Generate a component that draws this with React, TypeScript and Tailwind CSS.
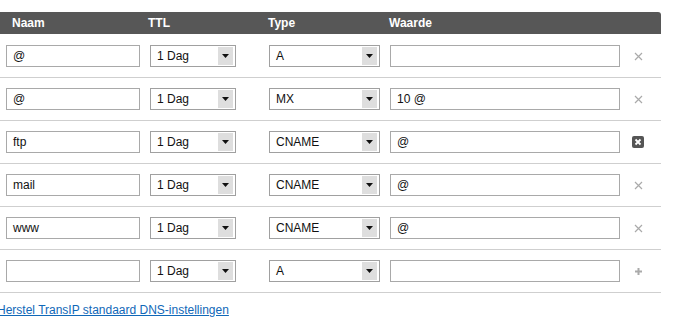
import React from 'react';

interface DnsRecord {
  name: string;
  ttl: string;
  type: string;
  value: string;
  action: 'remove' | 'remove-active' | 'add';
}

const records: DnsRecord[] = [
  { name: '@', ttl: '1 Dag', type: 'A', value: '', action: 'remove' },
  { name: '@', ttl: '1 Dag', type: 'MX', value: '10 @', action: 'remove' },
  { name: 'ftp', ttl: '1 Dag', type: 'CNAME', value: '@', action: 'remove-active' },
  { name: 'mail', ttl: '1 Dag', type: 'CNAME', value: '@', action: 'remove' },
  { name: 'www', ttl: '1 Dag', type: 'CNAME', value: '@', action: 'remove' },
  { name: '', ttl: '1 Dag', type: 'A', value: '', action: 'add' },
];

const FakeSelect: React.FC<{ value: string; className: string }> = ({ value, className }) => (
  <div className={`h-[22px] border border-[#a0a0a0] bg-white flex items-center justify-between pl-[6px] pr-[2px] ${className}`}>
    <span className="text-[12px] text-[#111]">{value}</span>
    <span className="w-[15px] h-[18px] bg-[#dedede] flex items-center justify-center">
      <svg width="7" height="4" viewBox="0 0 7 4">
        <path d="M0 0h7L3.5 4z" fill="#111" />
      </svg>
    </span>
  </div>
);

const ActionIcon: React.FC<{ action: DnsRecord['action'] }> = ({ action }) => {
  if (action === 'add') {
    return (
      <svg width="9" height="9" viewBox="0 0 9 9">
        <path d="M4.5 1v7M1 4.5h7" stroke="#aaa" strokeWidth="2" />
      </svg>
    );
  }
  if (action === 'remove-active') {
    return (
      <svg width="12" height="12" viewBox="0 0 12 12">
        <rect width="12" height="12" rx="2" fill="#555" />
        <path d="M3.5 3.5l5 5M8.5 3.5l-5 5" stroke="#fff" strokeWidth="1.8" />
      </svg>
    );
  }
  return (
    <svg width="9" height="9" viewBox="0 0 9 9">
      <path d="M1 1l7 7M8 1l-7 7" stroke="#aaa" strokeWidth="1.2" />
    </svg>
  );
};

export default function App() {
  return (
    <div className="w-[678px] h-[320px] bg-white pt-[12px] overflow-hidden" style={{ fontFamily: '"Liberation Sans", Arial, sans-serif' }}>
      <div className="w-[661px]">
        <div className="h-[22px] bg-[#575757] rounded-tr-[3px] flex items-center text-white text-[12px] font-bold">
          <span className="ml-[12px] w-[136px]">Naam</span>
          <span className="w-[120px]">TTL</span>
          <span className="w-[121px]">Type</span>
          <span>Waarde</span>
        </div>
        {records.map((r, i) => (
          <div
            key={i}
            className={`flex items-center border-b border-[#cfcfcf] pb-[10px] ${i === 0 ? 'pt-[11px]' : 'pt-[10px]'}`}
          >
            <div className="ml-[6px] w-[134px] h-[22px] border border-[#a9a9a9] flex items-center px-[6px] text-[12px] text-[#111]">
              {r.name}
            </div>
            <FakeSelect value={r.ttl} className="ml-[10px] w-[86px]" />
            <FakeSelect value={r.type} className="ml-[33px] w-[111px]" />
            <div className="ml-[10px] w-[230px] h-[22px] border border-[#a9a9a9] flex items-center px-[6px] text-[12px] text-[#111]">
              {r.value}
            </div>
            <div className="ml-[12px] w-[12px] h-[12px] flex items-center justify-center">
              <ActionIcon action={r.action} />
            </div>
          </div>
        ))}
        <div className="mt-[9px] -ml-[3px] leading-[14px]">
          <a href="#" className="text-[12px] leading-[14px] text-[#1068b8] underline">
            Herstel TransIP standaard DNS-instellingen
          </a>
        </div>
      </div>
    </div>
  );
}
